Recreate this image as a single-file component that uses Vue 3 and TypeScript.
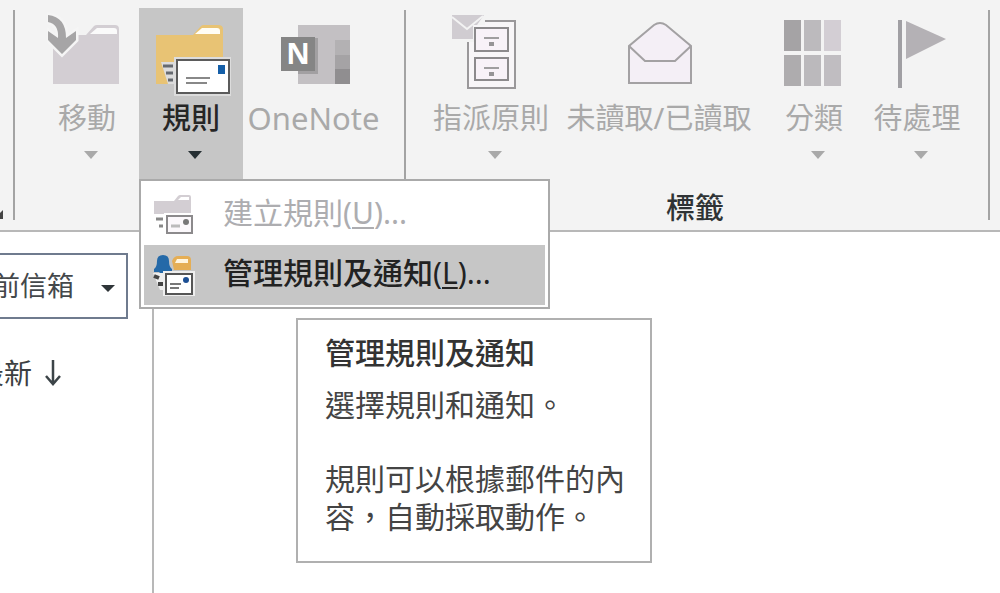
<script setup lang="ts">
import { ref } from 'vue'

const mailbox = ref('current')
</script>

<template>
  <div class="app" lang="zh-TW">
    <header class="ribbon">
      <section class="group steps">
        <button class="launcher" type="button" aria-label="快速步驟">
          <svg width="12" height="12" viewBox="0 0 12 12"><path d="M1 1l8 8" fill="none" stroke="#444" stroke-width="2" /><path d="M12 2v9H3z" fill="#444" /></svg>
        </button>
      </section>

      <section class="group move">
        <div class="tools">
          <button class="tool" type="button" disabled>
            <svg class="icon" viewBox="46 8 80 88">
              <path d="M52 35h33l8-9q1-1 3-1h18q4 0 4 4v55H52z" fill="#d3ced3" />
              <path d="M89 34l7-6h17q3 0 3 3v3z" fill="#fafafa" />
              <path d="M47 15q18 2 18 23l10-7v9L61 54 47 40v-9l10 7q1-14-10-16z" fill="#a6a5a6" stroke="#f5f5f5" stroke-width="5" paint-order="stroke" />
            </svg>
            <span class="label">移動</span>
            <svg class="caret" viewBox="0 0 14 8"><path d="M0 0h14L7 8z" /></svg>
          </button>

          <div class="dropdown">
            <button class="tool open" type="button" aria-haspopup="menu" aria-expanded="true">
              <svg class="icon" viewBox="151 8 80 88">
                <path d="M156 35h37l8-9q1-1 3-1h14q5 0 5 4v55h-67z" fill="#e8c374" />
                <path d="M195 34l7-6h15q3 0 3 3v3z" fill="#fffdf5" />
                <path d="M161 62h13v22h-6z" fill="#dcdcdc" />
                <path d="M163 66h10M166 73h7M168 80h5" stroke="#666a70" stroke-width="3" />
                <path d="M177 60h52v33h-52z" fill="#fff" stroke="#dcdcdc" stroke-width="6" />
                <path d="M177 60h52v33h-52z" fill="#fff" stroke="#5b5b5b" stroke-width="2" />
                <path d="M218 65h7v9h-7z" fill="#155fa8" />
                <path d="M186 78h24M186 83h21" stroke="#888" stroke-width="2" />
              </svg>
              <span class="label">規則</span>
              <svg class="caret" viewBox="0 0 14 8"><path d="M0 0h14L7 8z" /></svg>
            </button>

            <div class="menu" role="menu">
              <button class="item" type="button" role="menuitem" disabled>
                <svg class="item-icon" viewBox="0 0 42 42">
                  <path d="M1 7h20l4-5q1-1 2-1h9q2 0 2 2v17H1z" fill="#d3ced3" />
                  <path d="M25 6l3-3h8v3z" fill="#fff" />
                  <path d="M0 21h14v20H0z" fill="#fff" />
                  <path d="M3 25h7M6 32h4" stroke="#888" stroke-width="3" />
                  <path d="M14 22h25v17H14z" fill="#fbf8fb" stroke="#fff" stroke-width="6" />
                  <path d="M14 22h25v17H14z" fill="#fbf8fb" stroke="#8c8a8c" stroke-width="2" />
                  <circle cx="33" cy="28" r="3" fill="#777" />
                  <path d="M18 32h9" stroke="#bbb" stroke-width="3" />
                </svg>
                <span>建立規則(<u>U</u>)...</span>
              </button>
              <button class="item active" type="button" role="menuitem">
                <svg class="item-icon" viewBox="0 0 42 42">
                  <path d="M19 7q2-5 6-5h9q4 0 4 4v10H21z" fill="#e5ae55" />
                  <path d="M24 5h11v4H22z" fill="#fff5df" />
                  <path d="M1 15q3-2 3-8 0-6 6-6t6 6q0 6 3 8v3h-5q-4 5-8 0H1z" fill="#2469a8" />
                  <path d="M0 19h13v17H7z" fill="#eee" />
                  <path d="M1 22l5 2M5 30h5" stroke="#444" stroke-width="4" />
                  <path d="M13 20h26v20H13z" fill="#fff" stroke="#eee" stroke-width="6" />
                  <path d="M13 20h26v20H13z" fill="#fff" stroke="#555" stroke-width="2" />
                  <circle cx="33" cy="26" r="3" fill="#1c4f94" />
                  <path d="M17 30h11M17 34h9" stroke="#777" stroke-width="2" />
                </svg>
                <span>管理規則及通知<span class="key">(<u>L</u>)...</span></span>
              </button>
              <div class="tooltip" role="tooltip">
                <h2>管理規則及通知</h2>
                <p>選擇規則和通知。</p>
                <p class="detail">規則可以根據郵件的內容，自動採取動作。</p>
              </div>
            </div>
          </div>

          <button class="tool onenote" type="button" disabled>
            <svg class="icon" viewBox="273 8 80 88">
              <path d="M297 25h52v59h-52z" fill="#c3c0c3" />
              <path d="M334 40h15v15h-15z" fill="#b3b1b3" />
              <path d="M334 55h15v14h-15z" fill="#a5a3a5" />
              <path d="M334 69h15v15h-15z" fill="#908e90" />
              <path d="M297 38h20v36h-20z" fill="#a2a0a2" />
              <path d="M280 37h34v34h-34z" fill="#858585" />
              <text x="297" y="64" text-anchor="middle" class="mark">N</text>
            </svg>
            <span class="label latin">OneNote</span>
          </button>
        </div>
      </section>

      <section class="group tags">
        <div class="tools">
          <button class="tool" type="button" disabled>
            <svg class="icon" viewBox="451 8 80 88">
              <path d="M468 21h47v67h-47z" fill="#f8f6f8" stroke="#9a989a" stroke-width="2" />
              <path d="M449 12h36v13H474v17H449z" fill="#f3f3f3" />
              <path d="M452 15h32l-7 10h-4v14h-21z" fill="#d0ccd1" />
              <path d="M452 17l15 12 16-13" fill="none" stroke="#f3f3f3" stroke-width="2" />
              <path d="M475 28h33v23h-33zM475 58h33v22h-33z" fill="#f8f2f8" stroke="#8c8a8c" stroke-width="2" />
              <path d="M484 38h15M484 68h15" stroke="#a09ea0" stroke-width="2" />
              <path d="M489 44h5M489 74h5" stroke="#969496" stroke-width="4" />
            </svg>
            <span class="label">指派原則</span>
            <svg class="caret" viewBox="0 0 14 8"><path d="M0 0h14L7 8z" /></svg>
          </button>
          <button class="tool" type="button" disabled>
            <svg class="icon" viewBox="619 8 80 88">
              <path d="M629 83V46l25-21q6-4 12 0l25 21v37z" fill="#f4eff6" stroke="#a3a1a3" stroke-width="2" />
              <path d="M629 46l16 15h30l16-15" fill="none" stroke="#a3a1a3" stroke-width="2" />
            </svg>
            <span class="label">未讀取/已讀取</span>
          </button>
          <button class="tool" type="button" disabled>
            <svg class="icon" viewBox="774 8 80 88">
              <path d="M784 20h17v31h-17z" fill="#a5a3a5" />
              <path d="M804 20h17v31h-17z" fill="#bcbabd" />
              <path d="M824 20h17v31h-17z" fill="#d3ced4" />
              <path d="M784 55h17v31h-17z" fill="#aeacae" />
              <path d="M804 55h17v31h-17z" fill="#bbb9bc" />
              <path d="M824 55h17v31h-17z" fill="#c0bdc1" />
            </svg>
            <span class="label">分類</span>
            <svg class="caret" viewBox="0 0 14 8"><path d="M0 0h14L7 8z" /></svg>
          </button>
          <button class="tool" type="button" disabled>
            <svg class="icon" viewBox="877 8 80 88">
              <path d="M898 20h4v68h-4z" fill="#a09fa3" />
              <path d="M906 21l40 18-40 20z" fill="#b4b1b5" />
            </svg>
            <span class="label">待處理</span>
            <svg class="caret" viewBox="0 0 14 8"><path d="M0 0h14L7 8z" /></svg>
          </button>
        </div>
        <h3 class="caption">標籤</h3>
      </section>
    </header>

    <main class="body">
      <aside class="pane">
        <div class="scope">
          <select v-model="mailbox" aria-label="搜尋範圍">
            <option value="current">目前信箱</option>
          </select>
          <svg class="scope-caret" viewBox="0 0 14 8"><path d="M0 0h14L7 7z" /></svg>
        </div>
        <button class="sort" type="button">
          <span>最新</span>
          <svg width="16" height="26" viewBox="0 0 16 26"><path d="M8 0v23M1 16l7 8 7-8" fill="none" stroke="#3c4448" stroke-width="2.500" /></svg>
        </button>
      </aside>
      <section class="content"></section>
    </main>
  </div>
</template>

<style>
body {
  margin: 0;
  background: #fff;
}
</style>

<style scoped>
.app {
  display: flex;
  flex-direction: column;
  min-height: 100vh;
  overflow: hidden;
  font-family: "Noto Sans", "Noto Sans CJK TC", sans-serif;
  color: #3c3f42;
}

button,
select {
  font: inherit;
  color: inherit;
  border: 0;
  border-radius: 0;
  padding: 0;
  background: none;
}

.ribbon {
  display: flex;
  box-sizing: border-box;
  padding-top: 8px;
  height: 232px;
  background: #f3f3f3;
  border-bottom: 2px solid #b8b8b8;
}

.group {
  position: relative;
  box-sizing: border-box;
  display: flex;
  flex-direction: column;
}

.group::after {
  content: "";
  position: absolute;
  top: 2px;
  right: 0;
  bottom: 10px;
  width: 2px;
  background: #a3a3a3;
}

.steps {
  width: 15px;
  justify-content: flex-end;
  align-items: flex-start;
  padding-bottom: 10px;
}

.launcher {
  display: flex;
  margin-left: -9px;
}

.move {
  padding: 0 22px 0 20px;
}

.tags {
  flex: 1;
  margin-right: 10px;
  padding: 0 24px 0 18px;
}

.tools {
  display: flex;
}

.tags .tools {
  display: grid;
  grid-template-columns: 134fr 202fr 108fr 98fr;
}

.tool {
  box-sizing: border-box;
  display: flex;
  flex-direction: column;
  align-items: center;
  width: 104px;
  height: 171px;
  font-size: 29px;
  color: #a9a9a9;
  fill: #a9a9a9;
}

.tags .tool {
  width: 100%;
}

.tool.onenote {
  width: 141px;
}

.latin {
  font-size: 31px;
}

.open {
  background: #c6c6c6;
  color: #262626;
  fill: #262f33;
}

.open .label {
  font-weight: 500;
}

.icon {
  width: 80px;
  height: 88px;
}

.label {
  line-height: 44px;
  white-space: nowrap;
}

.caret {
  width: 14px;
  height: 8px;
  margin: 11px 0 0 8px;
}

.mark {
  font: 700 29px "Open Sans", sans-serif;
  fill: #fff;
}

.caption {
  margin: 7px 0 0;
  text-align: center;
  font-size: 29px;
  line-height: 44px;
  font-weight: 500;
  color: #2f3335;
}

.dropdown {
  position: relative;
}

.menu {
  position: absolute;
  z-index: 2;
  top: 100%;
  left: 0;
  box-sizing: border-box;
  width: 411px;
  padding: 4px 3px 2px;
  background: #fff;
  border: 2px solid #aaa;
}

.item {
  display: flex;
  align-items: center;
  gap: 28px;
  width: 100%;
  height: 60px;
  padding-left: 9px;
  font-size: 30px;
  line-height: 40px;
  white-space: nowrap;
  color: #adadb0;
}

.item > span {
  padding-bottom: 4px;
}

.active {
  background: #c6c6c6;
  color: #222;
  font-weight: 500;
}

.key {
  font-weight: 400;
}

.item u {
  text-decoration-thickness: 2px;
  text-underline-offset: 3px;
}

.item-icon {
  width: 42px;
  height: 42px;
}

.tooltip {
  position: absolute;
  top: 137px;
  left: 155px;
  box-sizing: border-box;
  width: 356px;
  padding: 14px 24px 25px 27px;
  background: #fff;
  border: 2px solid #b0b0b0;
  font-size: 30px;
  line-height: 38px;
  color: #444;
}

.tooltip h2 {
  margin: 0 0 14px;
  font-size: 30px;
  font-weight: 500;
  color: #333;
}

.tooltip p {
  margin: 0;
}

.tooltip .detail {
  margin-top: 36px;
}

.body {
  display: flex;
  flex: 1;
}

.pane {
  box-sizing: border-box;
  width: 154px;
  padding: 21px 24px 0 0;
  overflow: hidden;
  border-right: 2px solid #b8b8b8;
}

.content {
  flex: 1;
}

.scope {
  position: relative;
  margin-left: -45px;
}

.scope select {
  appearance: none;
  display: block;
  box-sizing: border-box;
  width: 100%;
  height: 66px;
  padding: 0 0 2px 9px;
  border: 2px solid #6f7b8e;
  background: #fff;
  font-size: 27px;
  color: #44484b;
}

.scope-caret {
  position: absolute;
  top: 32px;
  right: 13px;
  width: 14px;
  height: 8px;
  fill: #2f3538;
  pointer-events: none;
}

.sort {
  display: flex;
  align-items: center;
  gap: 13px;
  margin: 32px 0 0 -24px;
  font-size: 28px;
  line-height: 44px;
  white-space: nowrap;
}
</style>
